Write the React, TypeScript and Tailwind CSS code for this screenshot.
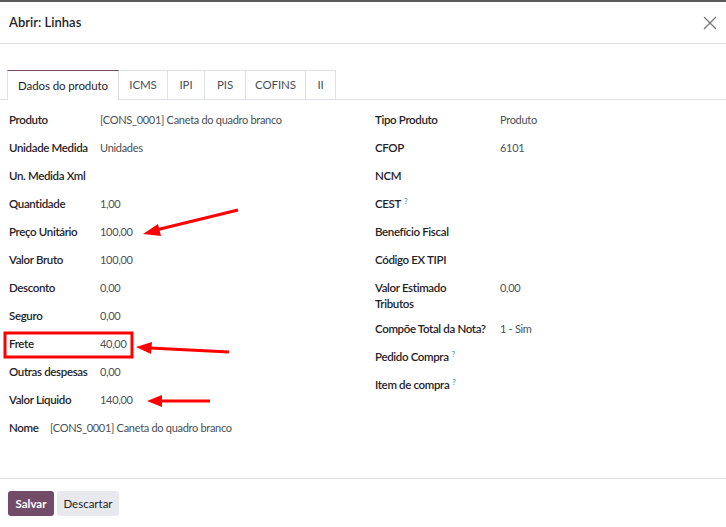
import React from "react";

const font = { fontFamily: 'Lato, "Noto Sans", sans-serif' };

function Row({ label, value, help, labelW }: { label: React.ReactNode; value?: string; help?: boolean; labelW: string }) {
  return (
    <div className="flex items-start min-h-[28px] pt-[6px] pb-[3px]">
      <div className={`${labelW} shrink-0 text-[11.5px] tracking-[-0.35px] leading-[16px] font-semibold text-[#1f2328] pr-2 whitespace-nowrap`}>
        {label}
        {help && <sup className="ml-[3px] text-[8px] text-[#3aa0c8]">?</sup>}
      </div>
      <div className="text-[11px] tracking-[-0.3px] leading-[16px] text-[#4a4f55] whitespace-nowrap">{value}</div>
    </div>
  );
}

export default function App() {
  const tabs = ["ICMS", "IPI", "PIS", "COFINS", "II"];
  const left: [string, string][] = [
    ["Produto", "[CONS_0001] Caneta do quadro branco"],
    ["Unidade Medida", "Unidades"],
    ["Un. Medida Xml", ""],
    ["Quantidade", "1,00"],
    ["Preço Unitário", "100,00"],
    ["Valor Bruto", "100,00"],
    ["Desconto", "0,00"],
    ["Seguro", "0,00"],
    ["Frete", "40,00"],
    ["Outras despesas", "0,00"],
    ["Valor Líquido", "140,00"],
  ];
  const right: [React.ReactNode, string, boolean, string][] = [
    ["Tipo Produto", "Produto", false, "a"],
    ["CFOP", "6101", false, "b"],
    ["NCM", "", false, "c"],
    ["CEST", "", true, "d"],
    ["Benefício Fiscal", "", false, "e"],
    ["Código EX TIPI", "", false, "f"],
    [
      <>
        Valor Estimado
        <br />
        Tributos
      </>,
      "0,00",
      false,
      "g",
    ],
    ["Compõe Total da Nota?", "1 - Sim", false, "h"],
    ["Pedido Compra", "", true, "i"],
    ["Item de compra", "", true, "j"],
  ];
  return (
    <div style={font} className="relative w-[726px] h-[527px] bg-white overflow-hidden flex flex-col border-t-2 border-[#5a5a5a]">
      <div className="h-[42px] flex items-center justify-between pl-[9px] pr-[8px] border-b border-[#dcdcdc] shrink-0">
        <div className="text-[13px] font-semibold text-[#1f2328]">Abrir: Linhas</div>
        <svg width="14" height="14" viewBox="0 0 14 14" className="mr-[1px]">
          <path d="M1 1L13 13M13 1L1 13" stroke="#777" strokeWidth="1.3" />
        </svg>
      </div>
      <div className="flex-1 flex flex-col">
        <div className="mt-[26px] flex border-b border-[#dee2e6] pl-[7px] h-[30px]">
          <div className="w-[112px] justify-center flex items-center text-[11.5px] tracking-[-0.1px] text-[#1f2328] border-t border-t-[#714B67] border-x border-x-[#dee2e6] bg-white -mb-px h-[30px]">
            Dados do produto
          </div>
          {tabs.map((t, i) => (
            <div
              key={t}
              className={`${["w-[49px]", "w-[37px]", "w-[41px]", "w-[60px]", "w-[30px]"][i]} justify-center flex items-center text-[11.5px] tracking-[-0.1px] text-[#4a4f55] border border-[#dee2e6] border-l-0 border-b-0 h-[29px]`}
            >
              {t}
            </div>
          ))}
        </div>
        <div className="flex pt-[6px]">
          <div className="w-[365px] pl-[9px]">
            {left.map(([l, v]) => (
              <Row key={l} label={l} value={v} labelW="w-[91px]" />
            ))}
            <div className="flex items-start min-h-[28px] pt-[6px] pb-[3px]">
              <div className="w-[41px] shrink-0 text-[11.5px] tracking-[-0.35px] leading-[16px] font-semibold text-[#1f2328]">Nome</div>
              <div className="text-[11px] tracking-[-0.3px] leading-[16px] text-[#4a4f55]">[CONS_0001] Caneta do quadro branco</div>
            </div>
          </div>
          <div className="flex-1 pl-[10px]">
            {right.map(([l, v, h, k]) => (
              <Row key={k} label={l} value={v} help={h} labelW="w-[125px]" />
            ))}
          </div>
        </div>
      </div>
      <div className="border-t border-[#dcdcdc] h-[49px] shrink-0 flex items-start pt-[12px] pl-[8px] gap-[3px]">
        <button className="h-[25px] w-[46px] rounded-[3px] bg-[#714B67] text-white text-[11.5px] font-bold">Salvar</button>
        <button className="h-[25px] w-[62px] rounded-[3px] bg-[#e7e9ed] text-[#1f2328] text-[11.5px]">Descartar</button>
      </div>
      <svg className="absolute inset-0 pointer-events-none" width="726" height="527">
        <rect x="5" y="331" width="127" height="24" fill="none" stroke="#ff0000" strokeWidth="3" />
        <line x1="238" y1="208" x2="156" y2="228" stroke="#ff0000" strokeWidth="3" />
        <polygon points="143,232 158,222 161,234" fill="#ff0000" />
        <line x1="229" y1="350" x2="150" y2="346" stroke="#ff0000" strokeWidth="3" />
        <polygon points="136,345 152,340 151,352" fill="#ff0000" />
        <line x1="210" y1="399" x2="160" y2="399" stroke="#ff0000" strokeWidth="3" />
        <polygon points="147,399 162,393 162,405" fill="#ff0000" />
      </svg>
    </div>
  );
}
